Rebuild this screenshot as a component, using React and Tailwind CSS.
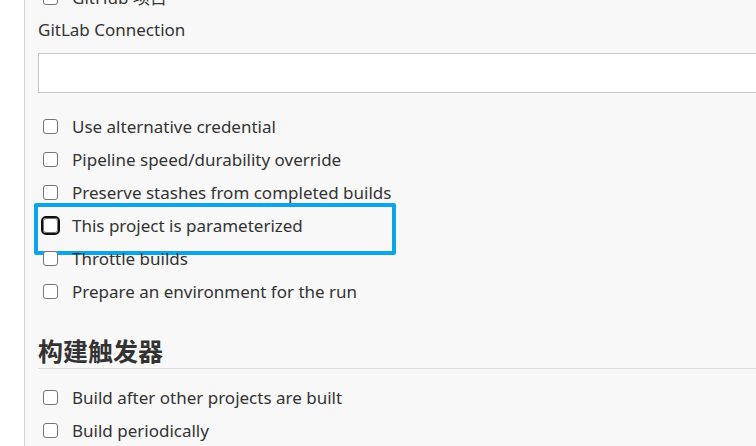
import React from "react";

const font = { fontFamily: '"Noto Sans", "Noto Sans CJK SC", sans-serif' };

function Box({ focused }) {
    return (
        <span
            className={`block w-[15px] h-[15px] shrink-0 rounded-[3px] bg-white border border-[#767676] ${
                focused ? "outline-2 outline-[#111] outline-offset-0" : ""
            }`}
        />
    );
}

function Row({ label, focused, highlight }) {
    return (
        <div className="relative flex items-center h-[33px] pl-[5px] gap-[14px]">
            <Box focused={focused} />
            <span className="text-[17px] text-[#333] whitespace-nowrap">{label}</span>
            {highlight && (
                <div className="absolute left-[-4px] top-[-6px] w-[362px] h-[52px] border-[4px] border-[#0ba5e8] rounded-[2px]" />
            )}
        </div>
    );
}

const general = [
    "Use alternative credential",
    "Pipeline speed/durability override",
    "Preserve stashes from completed builds",
    "This project is parameterized",
    "Throttle builds",
    "Prepare an environment for the run",
];

export default function App() {
    return (
        <div className="flex w-[756px] h-[446px] overflow-hidden bg-white" style={font}>
            <div className="w-[25px] shrink-0 bg-white border-r border-[#d4d4d4]" />
            <div className="flex-1 bg-[#f8f8f8] pl-[13px] overflow-hidden">
                <div className="mt-[-19px]">
                    <Row label="GitHub 项目" />
                </div>

                <div className="mt-[4px] h-[24px] flex items-center text-[17px] text-[#333]">
                    GitLab Connection
                </div>
                <div className="mt-[11px] h-[40px] w-[760px] bg-white border border-[#c8c8c8]" />

                <div className="mt-[17px]">
                    {general.map((g) => (
                        <Row
                            key={g}
                            label={g}
                            focused={g === "This project is parameterized"}
                            highlight={g === "This project is parameterized"}
                        />
                    ))}
                </div>

                <div className="mt-[26px] h-[35px] border-b border-[#dcdcdc] flex items-center">
                    <h2 className="text-[25px] font-bold text-[#333] leading-none">构建触发器</h2>
                </div>

                <div className="mt-[12px]">
                    <Row label="Build after other projects are built" />
                    <Row label="Build periodically" />
                </div>
            </div>
        </div>
    );
}
